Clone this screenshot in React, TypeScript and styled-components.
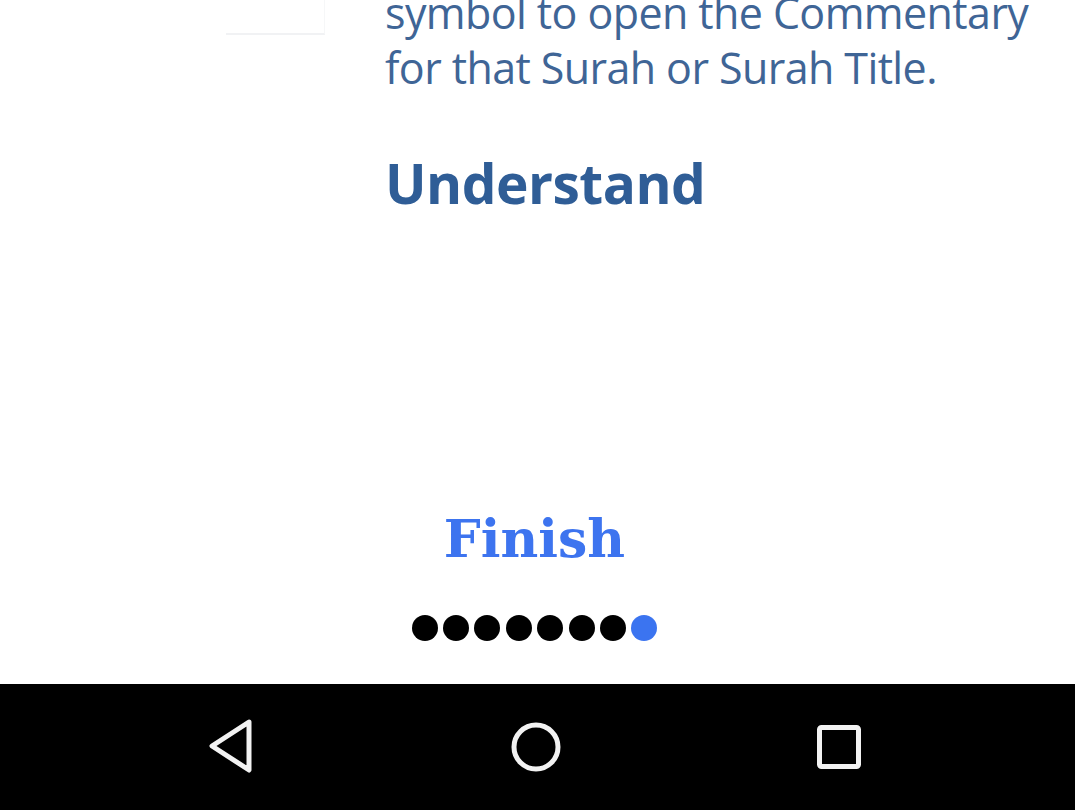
import React from "react";
import styled, { createGlobalStyle } from "styled-components";

const Global = createGlobalStyle`
  html, body { margin: 0; padding: 0; background: #ffffff; }
  body { width: 1075px; height: 810px; overflow: hidden; }
  #root { width: 1075px; height: 810px; }
`;

const Screen = styled.div`
  width: 1075px;
  height: 810px;
  display: flex;
  flex-direction: column;
  background: #ffffff;
  overflow: hidden;
`;

const Slide = styled.div`
  flex: 1;
  display: flex;
  flex-direction: column;
  align-items: center;
  min-height: 0;
  padding-right: 6px;
`;

const Tutorial = styled.div`
  align-self: stretch;
  display: flex;
  flex-direction: row;
  align-items: flex-start;
  height: 470px;
`;

const Margin = styled.div`
  width: 385px;
  flex: none;
  display: flex;
  justify-content: flex-end;
  padding-right: 60px;
  box-sizing: border-box;
`;

const FaintBox = styled.div`
  width: 98px;
  height: 33px;
  border-bottom: 2px solid #f1f2f4;
  border-right: 1px solid #f6f7f8;
`;

const TextColumn = styled.div`
  display: flex;
  flex-direction: column;
  margin-top: -15px;
`;

const Body = styled.p`
  margin: 0;
  font-family: "Open Sans", "Noto Sans", sans-serif;
  font-size: 43px;
  line-height: 55px;
  color: #3f6596;
  letter-spacing: -0.6px;
  white-space: nowrap;
`;

const Heading = styled.h2`
  margin: 60px 0 0 0;
  font-family: "Open Sans", "Noto Sans", sans-serif;
  font-weight: 700;
  font-size: 55px;
  line-height: 55px;
  color: #2f5d96;
  letter-spacing: -0.5px;
`;

const FinishButton = styled.button`
  border: none;
  background: transparent;
  padding: 0;
  margin: 43px 0 0 0;
  font-family: "DejaVu Serif", "Liberation Serif", serif;
  font-weight: 700;
  font-size: 52px;
  line-height: 52px;
  color: #3d74ef;
  cursor: pointer;
`;

const Dots = styled.div`
  display: flex;
  gap: 5.4px;
  margin-top: 50px;
`;

const Dot = styled.span<{ $active?: boolean }>`
  width: 26px;
  height: 26px;
  border-radius: 50%;
  background: ${(p) => (p.$active ? "#3b74f0" : "#000000")};
`;

const NavBar = styled.nav`
  height: 126px;
  flex: none;
  background: #000000;
  display: flex;
  justify-content: center;
  align-items: center;
  padding-right: 4px;
`;

const NavButton = styled.button`
  width: 303px;
  height: 100%;
  border: none;
  background: transparent;
  padding: 0;
  display: flex;
  justify-content: center;
  align-items: center;
`;

const BackIcon = () => (
  <svg width="52" height="56" viewBox="0 0 52 56">
    <path
      d="M42 3 L5 27 L42 51 Z"
      fill="none"
      stroke="#f2f2f2"
      strokeWidth="5"
      strokeLinejoin="round"
    />
  </svg>
);

const HomeIcon = () => (
  <svg width="52" height="52" viewBox="0 0 52 52">
    <circle cx="26" cy="26" r="22" fill="none" stroke="#f2f2f2" strokeWidth="5" />
  </svg>
);

const RecentIcon = () => (
  <svg width="48" height="48" viewBox="0 0 48 48">
    <rect x="4.5" y="4.5" width="39" height="39" rx="2" fill="none" stroke="#f2f2f2" strokeWidth="5" />
  </svg>
);

export default function App() {
  const pages = 8;
  const current = 7;
  return (
    <>
      <Global />
      <Screen>
        <Slide>
          <Tutorial>
            <Margin>
              <FaintBox />
            </Margin>
            <TextColumn>
              <Body>symbol to open the Commentary</Body>
              <Body>for that Surah or Surah Title.</Body>
              <Heading>Understand</Heading>
            </TextColumn>
          </Tutorial>
          <FinishButton>Finish</FinishButton>
          <Dots>
            {Array.from({ length: pages }).map((_, i) => (
              <Dot key={i} $active={i === current} />
            ))}
          </Dots>
        </Slide>
        <NavBar>
          <NavButton aria-label="Back">
            <BackIcon />
          </NavButton>
          <NavButton aria-label="Home">
            <HomeIcon />
          </NavButton>
          <NavButton aria-label="Recent apps">
            <RecentIcon />
          </NavButton>
        </NavBar>
      </Screen>
    </>
  );
}
